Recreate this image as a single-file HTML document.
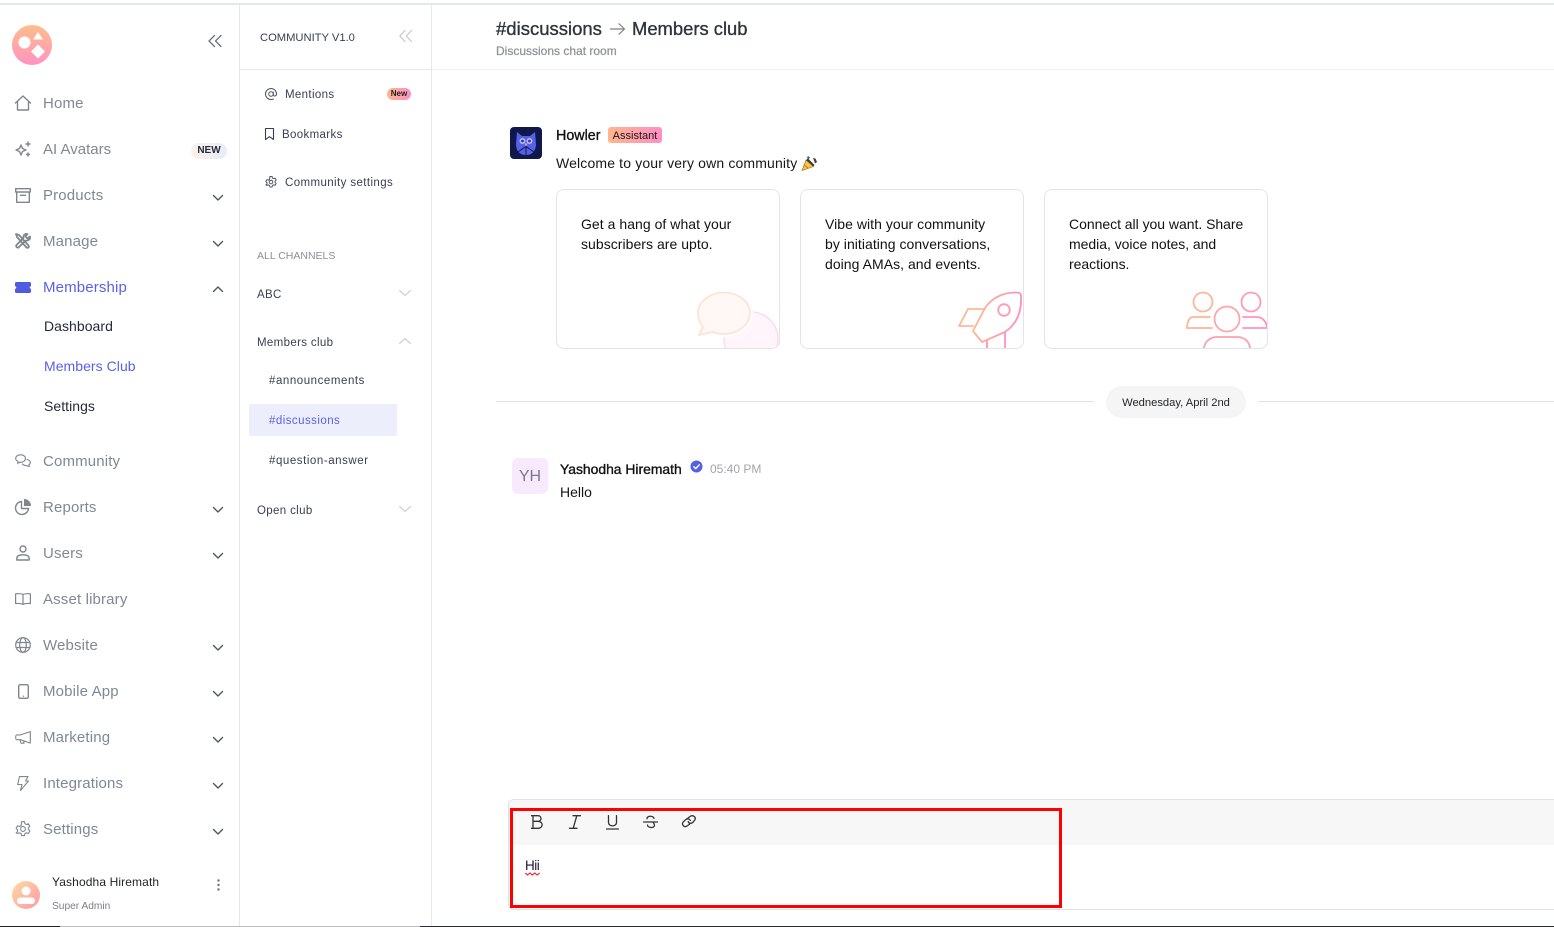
<!DOCTYPE html>
<html lang="en"><head><meta charset="utf-8"><title>Community</title>
<style>
html,body{margin:0;padding:0;background:#fff}
body{width:1554px;height:927px;position:relative;overflow:hidden;font-family:"Liberation Sans",sans-serif;color:#111}
.t{position:absolute;white-space:nowrap;line-height:20px;height:20px}
.n{font-size:15px;color:#7f8894;left:43px;letter-spacing:.15px}
.s{font-size:14px;color:#1f2937;left:44px;letter-spacing:.05px}
.c{font-size:11.5px;color:#374151;letter-spacing:.35px}
.h{letter-spacing:.55px}
.b{position:absolute}
svg{position:absolute;overflow:visible}
.i{fill:none;stroke:#80868e;stroke-width:1.4;stroke-linecap:round;stroke-linejoin:round}
.ch{fill:none;stroke:#4b5563;stroke-width:1.4;stroke-linecap:round;stroke-linejoin:round}
.lc{fill:none;stroke:#c9cdd3;stroke-width:1.2;stroke-linecap:round;stroke-linejoin:round}
.card{position:absolute;top:189px;width:222px;height:158px;border:1px solid #e4e4e4;border-radius:8px;background:#fff;overflow:hidden}
.card p{position:absolute;left:24px;top:24px;margin:0;font-size:14px;line-height:20px;color:#111;white-space:nowrap;letter-spacing:.04px}
.tb{fill:none;stroke:#333;stroke-width:1.3;stroke-linecap:round;stroke-linejoin:round}
</style></head><body>
<svg width="0" height="0" style="left:0;top:0"><defs>
<linearGradient id="g1" x1="0" y1="0" x2="0" y2="1"><stop offset="0" stop-color="#ffbd8a"/><stop offset="1" stop-color="#ff93c2"/></linearGradient>
<linearGradient id="g2" x1="0" y1="0" x2="1" y2="0"><stop offset="0" stop-color="#ffb68c"/><stop offset="1" stop-color="#ff8fc3"/></linearGradient>
</defs></svg>

<!-- top strip + frame lines -->
<div class="b" style="left:0;top:3px;width:1554px;height:2px;background:#dfe9e9"></div>
<div class="b" style="left:239px;top:5px;width:1px;height:921px;background:#e5e7eb"></div>
<div class="b" style="left:431px;top:5px;width:1px;height:921px;background:#e8e9ee"></div>
<div class="b" style="left:240px;top:69px;width:192px;height:1px;background:#e5e7eb"></div>
<div class="b" style="left:432px;top:69px;width:1122px;height:1px;background:#f1f1f1"></div>
<div class="b" style="left:0;top:926px;width:60px;height:1px;background:#222"></div>
<div class="b" style="left:60px;top:926px;width:360px;height:1px;background:#bbb"></div>
<div class="b" style="left:420px;top:926px;width:1134px;height:1px;background:#2a2d33"></div>

<!-- logo -->
<svg style="left:12px;top:25px" width="40" height="40" viewBox="0 0 40 40">
<circle cx="20" cy="20" r="20" fill="url(#g1)"/>
<circle cx="12.500" cy="17.500" r="6" fill="#fff"/>
<path d="M26 7l5 7.500H21z" fill="#fff"/>
<path d="M26 19.500l7 7-7 7-7-7z" fill="#fff"/>
</svg>
<svg style="left:208px;top:35px" width="14" height="12" viewBox="0 0 14 12"><path d="M6.500 .5L1 6l5.500 5.500M13 .5L7.500 6l5.500 5.500" fill="none" stroke="#6b7280" stroke-width="1.300" stroke-linecap="round" stroke-linejoin="round"/></svg>

<!-- nav -->
<svg class="i" style="left:15px;top:95px" width="16" height="16" viewBox="0 0 16 16"><path d="M.5 8L8 1l7.500 7M2.500 7v8h11V7"/></svg>
<div class="t n" style="top:94px">Home</div>
<svg class="i" style="left:15px;top:141px" width="16" height="16" viewBox="0 0 16 16"><path d="M6 4l1.500 3.500L11 9 7.500 10.500 6 14l-1.500-3.500L1 9l3.500-1.500zM13 1v4M11 3h4M13 12v3M11.500 13.500h3"/></svg>
<div class="t n" style="top:140px;letter-spacing:0">AI Avatars</div>
<div class="b" style="left:191px;top:143px;width:36px;height:16px;border-radius:8px;background:linear-gradient(90deg,#fbf1e9,#e9ebfb);font-size:10px;font-weight:700;color:#1f2937;line-height:16px;text-align:center">NEW</div>
<svg class="i" style="left:15px;top:188px" width="16" height="15" viewBox="0 0 16 15"><path d="M.7.700h14.600v3.300H.7zM1.700 4v10.300h12.600V4M5.500 7.300h5"/></svg>
<div class="t n" style="top:186px">Products</div>
<svg class="i" style="left:15px;top:233px;stroke-width:1.800" width="16" height="16" viewBox="0 0 16 16"><path d="M1 1l3 1 9.500 10.500c1 1.500-.5 3-2 2L2 4zM15 3.500l-2.500 2-2-2L12.500 1C10 .5 8 2 8.500 5L1.500 12c-1 1.500.8 3.200 2.300 2.300L10.500 7.500C13 8 15.500 6.500 15 3.500z"/></svg>
<div class="t n" style="top:232px">Manage</div>
<svg style="left:15px;top:282px" width="16" height="11" viewBox="0 0 16 11"><rect x="0" y="0" width="16" height="11" rx="1.500" fill="#4f5ce0"/><circle cx="0" cy="5.500" r="1.300" fill="#fff"/><circle cx="16" cy="5.500" r="1.300" fill="#fff"/></svg>
<div class="t n" style="top:278px;color:#5b60ea">Membership</div>
<div class="t s" style="top:316px">Dashboard</div>
<div class="t s" style="top:356px;color:#5b60ea">Members Club</div>
<div class="t s" style="top:396px">Settings</div>
<svg class="i" style="left:15px;top:454px;stroke-width:1.100" width="16" height="14" viewBox="0 0 16 14"><path d="M5.500.8c3 0 5 1.600 5 3.700s-2 3.700-5 3.700l-3 1 .6-1.800C1.500 6.700.7 5.700.7 4.500.7 2.400 2.800.8 5.500.8zM12 5.500c2 .4 3.300 1.600 3.300 3 0 1-.6 1.800-1.500 2.300l.6 1.800-3-1c-1.800 0-3.200-.6-4-1.600"/></svg>
<div class="t n" style="top:452px">Community</div>
<svg style="left:15px;top:499px" width="16" height="16" viewBox="0 0 16 16"><path d="M6.500 2.500a6.500 6.500 0 107 7H6.500z" fill="none" stroke="#80868e" stroke-width="1.400" stroke-linejoin="round"/><path d="M9 0a7 7 0 017 7H9z" fill="#80868e"/></svg>
<div class="t n" style="top:498px">Reports</div>
<svg class="i" style="left:16px;top:545px" width="14" height="16" viewBox="0 0 14 16"><circle cx="7" cy="4" r="3"/><path d="M.8 15v-1.500C.8 11 3 9.800 7 9.800s6.200 1.200 6.200 3.700V15z"/></svg>
<div class="t n" style="top:544px">Users</div>
<svg class="i" style="left:15px;top:593px;stroke-width:1.200" width="16" height="12" viewBox="0 0 16 12"><path d="M8 1.500C6.500.7 3.500.6.600.8v9.700c3-.2 5.900-.1 7.400.9 1.500-1 4.400-1.100 7.400-.9V.8C12.500.6 9.500.7 8 1.500zM8 1.500v9.900"/></svg>
<div class="t n" style="top:590px">Asset library</div>
<svg class="i" style="left:15px;top:637px;stroke-width:1.200" width="16" height="16" viewBox="0 0 16 16"><circle cx="8" cy="8" r="7.300"/><ellipse cx="8" cy="8" rx="3.300" ry="7.300"/><path d="M1 5.500h14M1 10.500h14"/></svg>
<div class="t n" style="top:636px">Website</div>
<svg class="i" style="left:18px;top:684px" width="10" height="15" viewBox="0 0 10 15"><rect x=".7" y=".7" width="9.600" height="13.600" rx="1.500"/><path d="M5.500 12.200h.01"/></svg>
<div class="t n" style="top:682px">Mobile App</div>
<svg class="i" style="left:15px;top:731px;stroke-width:1.100" width="16" height="13" viewBox="0 0 16 13"><path d="M15.300.6v11.500L5.500 8.700H1.800C.8 8.700.7 8 .7 6.300s.1-2.400 1.100-2.400h3.700zM5 8.700l1 3.500h3l-.5-2.500"/></svg>
<div class="t n" style="top:728px">Marketing</div>
<svg class="i" style="left:17px;top:776px;stroke-width:1.100" width="12" height="15" viewBox="0 0 12 15"><path d="M2.500.6h8.500L8.500 5H11.500L3.500 14.500 5 8.500H.7z"/></svg>
<div class="t n" style="top:774px">Integrations</div>
<svg class="i" style="left:15px;top:821px;stroke-width:1.100" width="16" height="16" viewBox="0 0 16 16"><circle cx="8" cy="8" r="2.400"/><path d="M6.500.7h3l.4 2 1.500.8 2-.7 1.500 2.600-1.500 1.400v1.700l1.500 1.400-1.500 2.600-2-.7-1.500.8-.4 2h-3l-.4-2-1.500-.8-2 .7L1.100 11.900l1.500-1.400V8.800L1.100 7.400 2.600 4.800l2 .7 1.500-.8z"/></svg>
<div class="t n" style="top:820px">Settings</div>

<svg class="ch" style="left:213px;top:195px" width="10" height="6" viewBox="0 0 10 6"><path d="M.5.500L5 5 9.500.5"/></svg>
<svg class="ch" style="left:213px;top:241px" width="10" height="6" viewBox="0 0 10 6"><path d="M.5.500L5 5 9.500.5"/></svg>
<svg class="ch" style="left:213px;top:286px" width="10" height="6" viewBox="0 0 10 6"><path d="M.5 5.500L5 1l4.500 4.500"/></svg>
<svg class="ch" style="left:213px;top:507px" width="10" height="6" viewBox="0 0 10 6"><path d="M.5.500L5 5 9.500.5"/></svg>
<svg class="ch" style="left:213px;top:553px" width="10" height="6" viewBox="0 0 10 6"><path d="M.5.500L5 5 9.500.5"/></svg>
<svg class="ch" style="left:213px;top:645px" width="10" height="6" viewBox="0 0 10 6"><path d="M.5.500L5 5 9.500.5"/></svg>
<svg class="ch" style="left:213px;top:691px" width="10" height="6" viewBox="0 0 10 6"><path d="M.5.500L5 5 9.500.5"/></svg>
<svg class="ch" style="left:213px;top:737px" width="10" height="6" viewBox="0 0 10 6"><path d="M.5.500L5 5 9.500.5"/></svg>
<svg class="ch" style="left:213px;top:783px" width="10" height="6" viewBox="0 0 10 6"><path d="M.5.500L5 5 9.500.5"/></svg>
<svg class="ch" style="left:213px;top:829px" width="10" height="6" viewBox="0 0 10 6"><path d="M.5.500L5 5 9.500.5"/></svg>

<!-- user -->
<svg style="left:12px;top:881px" width="28" height="28" viewBox="0 0 28 28"><defs><linearGradient id="g3" x1="0" y1="0" x2="1" y2="1"><stop offset="0" stop-color="#ffdca0"/><stop offset="1" stop-color="#ff96a8"/></linearGradient></defs><circle cx="14" cy="14" r="14" fill="url(#g3)"/><circle cx="14" cy="10" r="4.500" fill="#fff"/><rect x="5" y="16.500" width="18" height="6.500" rx="3.200" fill="#fff"/></svg>
<div class="t" style="left:52px;top:872px;font-size:12px;color:#1f2229;letter-spacing:.12px">Yashodha Hiremath</div>
<div class="t" style="left:52px;top:897px;font-size:10.200px;color:#7b7f86">Super Admin</div>
<svg style="left:217px;top:879px" width="3" height="12" viewBox="0 0 3 12"><circle cx="1.500" cy="1.500" r="1.200" fill="#6b7280"/><circle cx="1.500" cy="6" r="1.200" fill="#6b7280"/><circle cx="1.500" cy="10.500" r="1.200" fill="#6b7280"/></svg>

<!-- channel panel -->
<div class="t" style="left:260px;top:28px;font-size:11.200px;color:#374151">COMMUNITY V1.0</div>
<svg style="left:399px;top:30px" width="13" height="12" viewBox="0 0 13 12"><path d="M6 .5L.8 6 6 11.500M12.500 .5L7.300 6l5.200 5.500" fill="none" stroke="#c4c7cc" stroke-width="1.200" stroke-linecap="round" stroke-linejoin="round"/></svg>

<svg style="left:265px;top:88px" width="12" height="12" viewBox="0 0 12 12"><circle cx="6" cy="6" r="2.300" fill="none" stroke="#4b5563" stroke-width="1"/><path d="M8.300 3.800v3c0 1.700 3.200 1.700 3.200-.8A5.500 5.500 0 106 11.500c1 0 2-.2 2.800-.7" fill="none" stroke="#4b5563" stroke-width="1"/></svg>
<div class="t c" style="left:285px;top:85px">Mentions</div>
<div class="b" style="left:387px;top:88px;width:24px;height:12px;border-radius:6px;background:linear-gradient(90deg,#ffb68c,#ff8fc3);font-size:8px;font-weight:700;line-height:12px;text-align:center;color:#222">New</div>
<svg style="left:265px;top:128px" width="9" height="12" viewBox="0 0 9 12"><path d="M.5.500h8v11L4.500 8.700.5 11.500z" fill="none" stroke="#374151" stroke-width="1.100" stroke-linejoin="round"/></svg>
<div class="t c" style="left:282px;top:125px">Bookmarks</div>
<svg style="left:265px;top:176px" width="12" height="12" viewBox="0 0 16 16"><circle cx="8" cy="8" r="2.400" fill="none" stroke="#4b5563" stroke-width="1.300"/><path d="M6.500.7h3l.4 2 1.500.8 2-.7 1.500 2.600-1.500 1.400v1.700l1.500 1.400-1.500 2.600-2-.7-1.500.8-.4 2h-3l-.4-2-1.500-.8-2 .7L1.100 11.900l1.500-1.400V8.800L1.100 7.400 2.600 4.800l2 .7 1.500-.8z" fill="none" stroke="#4b5563" stroke-width="1.300" stroke-linejoin="round"/></svg>
<div class="t c" style="left:285px;top:173px;letter-spacing:.4px">Community settings</div>

<div class="t" style="left:257px;top:246px;font-size:10.500px;color:#8b9097">ALL CHANNELS</div>
<div class="t c" style="left:257px;top:285px">ABC</div>
<svg class="lc" style="left:399px;top:290px" width="12" height="6" viewBox="0 0 12 6"><path d="M.6.600L6 5.400 11.400.6"/></svg>
<div class="t c" style="left:257px;top:333px">Members club</div>
<svg class="lc" style="left:399px;top:338px" width="12" height="6" viewBox="0 0 12 6"><path d="M.6 5.400L6 .6l5.400 4.800"/></svg>
<div class="t c h" style="left:269px;top:371px">#announcements</div>
<div class="b" style="left:249px;top:404px;width:148px;height:32px;background:#eceefc;border-radius:2px"></div>
<div class="t c h" style="left:269px;top:411px;color:#5b60ea;letter-spacing:.45px">#discussions</div>
<div class="t c h" style="left:269px;top:451px">#question-answer</div>
<div class="t c" style="left:257px;top:501px">Open club</div>
<svg class="lc" style="left:399px;top:506px" width="12" height="6" viewBox="0 0 12 6"><path d="M.6.600L6 5.400 11.400.6"/></svg>

<!-- header -->
<div class="t" style="left:496px;top:19px;font-size:18.500px;color:#2f343b;-webkit-text-stroke:.35px #2f343b">#discussions</div>
<svg style="left:610px;top:23px" width="15" height="12" viewBox="0 0 15 12"><path d="M.5 6h14M9 .8L14.500 6 9 11.200" fill="none" stroke="#7d8186" stroke-width="1.200" stroke-linecap="round" stroke-linejoin="round"/></svg>
<div class="t" style="left:632px;top:19px;font-size:18.400px;color:#2f343b;-webkit-text-stroke:.35px #2f343b">Members club</div>
<div class="t" style="left:496px;top:41px;font-size:12px;color:#8e9298;-webkit-text-stroke:.25px #8e9298">Discussions chat room</div>

<!-- howler -->
<svg style="left:510px;top:127px" width="32" height="32" viewBox="0 0 32 32"><rect width="32" height="32" rx="4" fill="#10174a"/><path d="M7 5l5 4h8l5-4 1 12c0 6-3 11-10 11S6 23 6 17z" fill="#5560e8"/><circle cx="12.500" cy="14" r="3" fill="#b4b9ee"/><circle cx="19.500" cy="14" r="3" fill="#b4b9ee"/><circle cx="12.500" cy="14" r="1.400" fill="#333a8c"/><circle cx="19.500" cy="14" r="1.400" fill="#333a8c"/><path d="M14.500 16.500h3L16 19.500z" fill="#f2a0a8"/><path d="M16 19.500V28M8 25l8-5.500 8 5.500" fill="none" stroke="#10174a" stroke-width="1"/></svg>
<div class="t" style="left:556px;top:125.500px;font-size:14.300px;color:#111;-webkit-text-stroke:.35px #111">Howler</div>
<div class="b" style="left:608px;top:127px;width:54px;height:16px;border-radius:3px;background:linear-gradient(90deg,#ffb68c,#ff8fc3);font-size:11px;line-height:18px;text-align:center;color:#1b1420">Assistant</div>
<div class="t" style="left:556px;top:153px;font-size:14px;color:#15171c;letter-spacing:.15px">Welcome to your very own community</div>
<svg style="left:801px;top:155px" width="17" height="16" viewBox="0 0 17 16"><path d="M1 15.500L5 5l7.500 6.500z" fill="#f7c444" stroke="#8a6a1e" stroke-width=".6"/><path d="M5 5l7.500 6.500 1-1.500L7 3.500z" fill="#3a3a3a"/><path d="M7 1l2 1.500L7.500 4.500 6 3z" fill="#2f5d8a"/><path d="M12 3l2.500.5L16 7l-2 1.500z" fill="#5a3a2a"/><path d="M3 10l4 3" stroke="#d96a2b" stroke-width="1"/></svg>

<!-- cards -->
<div class="card" style="left:556px"><p>Get a hang of what your<br>subscribers are upto.</p>
<svg style="left:0;top:0" width="222" height="158" viewBox="0 0 222 158"><circle cx="194" cy="149" r="27" fill="#fff5fa" stroke="#ffdbe9" stroke-width="1.500"/><path d="M167 102.500c14 0 26 9 26 20.500s-12 21-26 21c-4 0-8-.7-11-2l-14 3 4-8.500c-3.500-3.500-5-8-5-13.500 0-11.500 12-20.500 26-20.500z" fill="#fff8f5" stroke="#fff" stroke-width="6" stroke-linejoin="round"/><path d="M167 102.500c14 0 26 9 26 20.500s-12 21-26 21c-4 0-8-.7-11-2l-14 3 4-8.500c-3.500-3.500-5-8-5-13.500 0-11.500 12-20.500 26-20.500z" fill="#fff8f5" stroke="#ffe2d6" stroke-width="1.800" stroke-linejoin="round"/></svg></div>
<div class="card" style="left:800px"><p>Vibe with your community<br>by initiating conversations,<br>doing AMAs, and events.</p>
<svg style="left:0;top:0" width="222" height="158" viewBox="0 0 222 158" fill="none" stroke-width="1.800" stroke-linecap="round" stroke-linejoin="round"><path d="M182 119H167L158 136H172" stroke="#ffb796"/><path d="M220 106C220 103 218 102.500 214 102.500C205 102.500 192 106 184 118L172 141L181 152L204 142C213 136 221 126 220 106Z" stroke="url(#g2)"/><circle cx="203" cy="120" r="5.800" stroke="#ff9ab5"/><path d="M186 151V160M204 142V160" stroke="#ff94bc"/></svg></div>
<div class="card" style="left:1044px"><p style="letter-spacing:-.03px">Connect all you want. Share<br>media, voice notes, and<br>reactions.</p>
<svg style="left:0;top:0" width="222" height="158" viewBox="0 0 222 158" fill="none" stroke-width="1.800" stroke-linecap="round"><circle cx="158" cy="112" r="9.500" stroke="#ffb596"/><path d="M165 127H148C144 127 142 133 142 138H167" stroke="#ffb596"/><circle cx="206" cy="112" r="9.500" stroke="#ff9cb4"/><path d="M198 127H212C218 127 222 133 222 138H198" stroke="#ff92bf"/><circle cx="182" cy="129" r="12.500" stroke="#ffa4aa"/><path d="M159 158C160 150 167 147 172 147H192C198 147 204 150 205 158" stroke="#ff9fae"/></svg></div>

<!-- date -->
<div class="b" style="left:496px;top:401px;width:598px;height:1px;background:#dfe1e4"></div>
<div class="b" style="left:1258px;top:401px;width:296px;height:1px;background:#dfe1e4"></div>
<div class="b" style="left:1106px;top:386px;width:140px;height:32px;border-radius:16px;background:#f5f5f5;font-size:11.200px;line-height:34px;text-align:center;color:#23262b">Wednesday, April 2nd</div>

<!-- message -->
<div class="b" style="left:512px;top:458px;width:36px;height:36px;border-radius:6px;background:#f9e9fd;font-size:16px;line-height:38px;text-align:center;color:#7b7794">YH</div>
<div class="t" style="left:560px;top:458.500px;font-size:13.900px;color:#111;-webkit-text-stroke:.35px #111">Yashodha Hiremath</div>
<svg style="left:690px;top:460px" width="13" height="13" viewBox="0 0 13 13"><circle cx="6.500" cy="6.500" r="6" fill="#5561e0"/><path d="M3.800 6.700l1.900 1.900 3.600-3.800" fill="none" stroke="#fff" stroke-width="1.400" stroke-linecap="round" stroke-linejoin="round"/></svg>
<div class="t" style="left:710px;top:459px;font-size:12px;color:#a3a5a9">05:40 PM</div>
<div class="t" style="left:560px;top:482px;font-size:14px;color:#15171c">Hello</div>

<!-- editor -->
<div class="b" style="left:508px;top:799px;width:1060px;height:109px;border:1px solid #e0e0e0;border-radius:6px;background:#fff"></div>
<div class="b" style="left:509px;top:800px;width:1045px;height:45px;background:#f7f7f7;border-radius:6px 0 0 0"></div>
<div class="b" style="left:510px;top:808px;width:546px;height:94px;border:3px solid #f00"></div>
<svg class="tb" style="left:531px;top:815px" width="12" height="14" viewBox="0 0 12 14"><path d="M.5.700h6.500c4 0 4 5.600 0 5.600H2M7 6.300c5.500 0 5.500 7 0 7H.5M2 .7v12.600"/></svg>
<svg class="tb" style="left:569px;top:815px" width="12" height="14" viewBox="0 0 12 14"><path d="M4 .7h7.500M.5 13.300h7.500M7.800.7L4.200 13.300"/></svg>
<svg class="tb" style="left:606px;top:815px" width="13" height="15" viewBox="0 0 13 15"><path d="M2.500.7v6.800c0 4.500 8 4.500 8 0V.7M.6 14h11.800"/></svg>
<svg class="tb" style="left:643px;top:815px" width="15" height="14" viewBox="0 0 15 14"><path d="M.6 7h13.800M11 3.500C11 1 4 0 4 3.700M4.500 10c0 3 7 3.500 7 .3 0-1-.5-2-1.500-3"/></svg>
<svg class="tb" style="left:681px;top:814px" width="16" height="14" viewBox="0 0 16 14"><path d="M6.500 4.500L9 2.500c3-2.200 6.500.8 4.800 3.500L12 8.200c-1.700 2-4.500 1-4.800-.7"/><path d="M9.300 6.500c-.6-1.500-3-2.500-4.800-.7L2.200 8C.3 10.500 3 14 6 12l2.700-2"/></svg>
<div class="t" style="left:525px;top:856px;font-size:13.500px;color:#1d1630;letter-spacing:-.5px">Hii</div>
<svg style="left:525px;top:872px" width="15" height="4" viewBox="0 0 15 4"><path d="M.3 1l2.200 2L5 1l2.300 2L9.800 1l2.300 2 2.600-2" fill="none" stroke="#e8323c" stroke-width="1.200"/></svg>
</body></html>
